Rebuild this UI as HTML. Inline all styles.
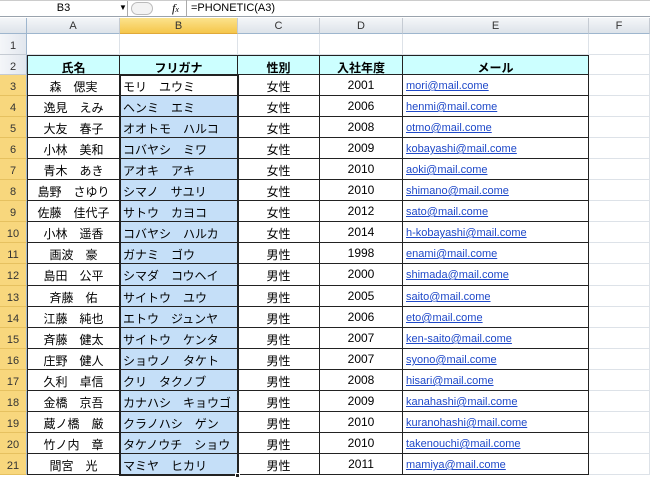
<!DOCTYPE html><html><head><meta charset="utf-8"><style>
body{margin:0;width:650px;height:478px;overflow:hidden;background:#fff;font-family:"Liberation Sans","Noto Sans CJK JP",sans-serif;font-size:12px;position:relative}
.a{position:absolute;box-sizing:border-box}
.ch{top:18px;height:16px;background:linear-gradient(#f4f6f9,#dde3ea);border-right:1px solid #c5cbd3;border-bottom:1px solid #9eb6ce;text-align:center;line-height:16px;color:#333;font-size:11px}
.rh{left:0;width:27px;background:linear-gradient(90deg,#f4f6f9,#e2e7ee);border-bottom:1px solid #c5cbd3;border-right:1px solid #9eb6ce;font-size:11px;color:#333;text-align:center;padding-top:6px}
.rh.s{background:#f8d77d;border-bottom-color:#e6c160}
.c{border-right:1px solid #222;border-bottom:1px solid #222;text-align:center;white-space:nowrap;padding-top:3px;font-size:12px}
.h{background:#ccffff;font-weight:bold}
.l{text-align:left;padding-left:3px}
.m{color:#1f49c9;text-decoration:underline;font-size:11px;padding-top:5px}
.g{border-right:1px solid #dde2e8;border-bottom:1px solid #dde2e8}
</style></head><body>
<div class="a" style="left:0;top:0;width:650px;height:17px;background:#fff;border-bottom:1px solid #9aa3ad;border-top:1px solid #ccc"></div>
<div class="a" style="left:0;top:1px;width:128px;height:15px;border-right:1px solid #aaa;text-align:center;line-height:15px;font-size:11px">B3</div>
<div class="a" style="left:119px;top:3px;font-size:8px">▼</div>
<div class="a" style="left:131px;top:2px;width:22px;height:13px;border:1px solid #bbb;border-radius:7px;background:#f3f3f3"></div>
<div class="a" style="left:172px;top:1px;font-style:italic;font-family:'Liberation Serif',serif;font-size:12px">f<span style="font-size:8px">x</span></div>
<div class="a" style="left:186px;top:0;width:1px;height:17px;background:#aaa"></div>
<div class="a" style="left:191px;top:2px;font-size:11px">=PHONETIC(A3)</div>
<div class="a ch" style="left:0;width:27px;border-right:1px solid #9eb6ce"></div>
<div class="a ch" style="left:27px;width:93px">A</div>
<div class="a ch" style="left:120px;width:118px;background:linear-gradient(#fbe38d,#f5c64b);border-bottom-color:#e0a93a">B</div>
<div class="a ch" style="left:238px;width:82px">C</div>
<div class="a ch" style="left:320px;width:83px">D</div>
<div class="a ch" style="left:403px;width:186px">E</div>
<div class="a ch" style="left:589px;width:61px">F</div>
<div id="g"></div>
<script>
var d=[["森　偲実","モリ　ユウミ","女性",2001,"mori"],["逸見　えみ","ヘンミ　エミ","女性",2006,"henmi"],["大友　春子","オオトモ　ハルコ","女性",2008,"otmo"],["小林　美和","コバヤシ　ミワ","女性",2009,"kobayashi"],["青木　あき","アオキ　アキ","女性",2010,"aoki"],["島野　さゆり","シマノ　サユリ","女性",2010,"shimano"],["佐藤　佳代子","サトウ　カヨコ","女性",2012,"sato"],["小林　遥香","コバヤシ　ハルカ","女性",2014,"h-kobayashi"],["画波　豪","ガナミ　ゴウ","男性",1998,"enami"],["島田　公平","シマダ　コウヘイ","男性",2000,"shimada"],["斉藤　佑","サイトウ　ユウ","男性",2005,"saito"],["江藤　純也","エトウ　ジュンヤ","男性",2006,"eto"],["斉藤　健太","サイトウ　ケンタ","男性",2007,"ken-saito"],["庄野　健人","ショウノ　タケト","男性",2007,"syono"],["久利　卓信","クリ　タクノブ","男性",2008,"hisari"],["金橋　京吾","カナハシ　キョウゴ","男性",2009,"kanahashi"],["蔵ノ橋　厳","クラノハシ　ゲン","男性",2010,"kuranohashi"],["竹ノ内　章","タケノウチ　ショウ","男性",2010,"takenouchi"],["間宮　光","マミヤ　ヒカリ","男性",2011,"mamiya"]];
var X=[27,120,238,320,403,589,650],h="";
function rowTop(r){return r==1?34:r==2?55:Math.round(75+(r-3)*21.05)}
for(var r=1;r<=21;r++){var t=rowTop(r),b=rowTop(r+1),H=b-t;
h+='<div class="a rh'+(r>=3?' s':'')+'" style="top:'+t+'px;height:'+H+'px">'+r+'</div>';
for(var c=0;c<6;c++){var L=X[c],W=X[c+1]-X[c],cls="g",txt="",st="";
if(r>=2&&c<5){cls="c";if(c==0)st+="border-left:1px solid #222;";if(r==2)st+="border-top:1px solid #222;";
if(r==2){cls+=" h";txt=["氏名","フリガナ","性別","入社年度","メール"][c];}
else{var e=d[r-3];txt=c==4?e[4]+"@mail.come":e[c];if(c==1){cls+=" l";if(r>3)st+="background:#c5dff8;";}if(c==4)cls+=" l m";}}
h+='<div class="a '+cls+'" style="left:'+L+'px;top:'+t+'px;width:'+W+'px;height:'+H+'px;'+st+'">'+txt+'</div>';}}
h+='<div class="a" style="left:119px;top:74px;width:120px;height:402px;border:2px solid #222"></div>';
h+='<div class="a" style="left:235px;top:473px;width:5px;height:5px;background:#222;border:1px solid #fff"></div>';
document.getElementById("g").innerHTML=h;
</script>
</body></html>
